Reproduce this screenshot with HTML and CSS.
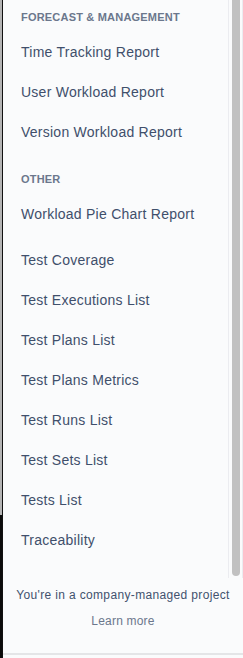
FILE: index.html
```html
<!DOCTYPE html>
<html lang="en">
  <head>
    <meta charset="UTF-8" />
    <meta name="viewport" content="width=device-width, initial-scale=1.0" />
    <title>Reports</title>
    <link rel="stylesheet" href="styles.css">
  </head>
  <body>
    <div class="edge"></div>

    <div class="panel">
      <div class="scroll-area">
        <div class="report-list">
          <div class="group first">
            <div class="group-title">Forecast &amp; management</div>
            <a class="item">Time Tracking Report</a>
            <a class="item">User Workload Report</a>
            <a class="item">Version Workload Report</a>
          </div>

          <div class="group">
            <div class="group-title">Other</div>
            <a class="item">Workload Pie Chart Report</a>
          </div>

          <div class="group plain">
            <a class="item">Test Coverage</a>
            <a class="item">Test Executions List</a>
            <a class="item">Test Plans List</a>
            <a class="item">Test Plans Metrics</a>
            <a class="item">Test Runs List</a>
            <a class="item">Test Sets List</a>
            <a class="item">Tests List</a>
            <a class="item">Traceability</a>
          </div>
        </div>

        <div class="scroll-track">
          <div class="scroll-thumb"></div>
        </div>
      </div>

      <div class="footer">
        <p>You're in a company-managed project</p>
        <a class="learn-more">Learn more</a>
      </div>
    </div>
  </body>
</html>
```

FILE: styles.css
```css
html,
body {
  margin: 0;
  padding: 0;
  height: 658px;
  overflow: hidden;
}
body {
  display: flex;
  font-family: "Liberation Sans", Arial, sans-serif;
  background-color: #fafbfc;
  color: #42526e;
}
.edge {
  width: 2px;
  flex-shrink: 0;
  border-right: 1px solid #111;
  background: linear-gradient(to bottom, #b4b4b4 0, #b4b4b4 515px, #0b0b0b 515px);
}
.panel {
  flex: 1;
  display: flex;
  flex-direction: column;
  height: 658px;
}
.scroll-area {
  display: flex;
  height: 578px;
}
.report-list {
  flex: 1;
  border-right: 1px solid #ebecf0;
}
.group-title {
  font-size: 11px;
  font-weight: bold;
  line-height: 16px;
  text-transform: uppercase;
  color: #6b778c;
  letter-spacing: 0.2px;
  padding: 19px 0 7px 18px;
}
.group.first .group-title {
  padding-top: 9px;
}
.group.plain {
  padding-top: 6px;
}
.item {
  display: block;
  height: 40px;
  line-height: 40px;
  padding-left: 18px;
  font-size: 14px;
  letter-spacing: 0.25px;
  color: #3f4f6b;
  cursor: pointer;
}
.scroll-track {
  width: 14px;
  flex-shrink: 0;
  display: flex;
  justify-content: center;
  border-right: 1px solid #ebecf0;
  box-sizing: border-box;
}
.scroll-thumb {
  width: 8px;
  height: 576px;
  margin-left: 1px;
  background-color: #c1c1c1;
  border-radius: 0 0 4px 4px;
}
.footer {
  flex: 1;
  text-align: center;
  border-bottom: 2px solid #e4e5e7;
  margin-bottom: 3px;
}
.footer p {
  margin: 8px 0 0;
  font-size: 12px;
  line-height: 18px;
  letter-spacing: 0.35px;
  color: #42526e;
}
.learn-more {
  display: inline-block;
  margin-top: 8px;
  font-size: 12px;
  line-height: 18px;
  letter-spacing: 0.2px;
  color: #6b778c;
  cursor: pointer;
}
```
